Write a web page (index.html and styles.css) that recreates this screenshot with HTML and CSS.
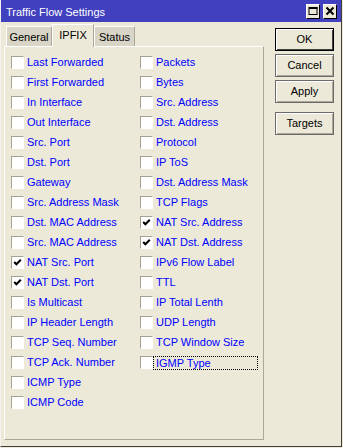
FILE: index.html
```html
<!DOCTYPE html>
<html>
<head>
<meta charset="utf-8">
<link rel="stylesheet" href="styles.css">
</head>
<body>
<div class="window">
  <div class="titlebar">
    <span class="title">Traffic Flow Settings</span>
    <div class="tb-buttons">
      <span class="tb-btn"><svg width="12" height="12" viewBox="0 0 12 12"><rect x="2" y="2.5" width="8" height="7" fill="none" stroke="#000" stroke-width="1"/><rect x="2" y="2" width="8.5" height="2" fill="#000"/></svg></span>
      <span class="tb-btn"><svg width="12" height="12" viewBox="0 0 12 12"><path d="M2.5 2.5 L9.5 9.5 M9.5 2.5 L2.5 9.5" stroke="#000" stroke-width="2"/></svg></span>
    </div>
  </div>
  <div class="body">
    <div class="left">
      <div class="tabs">
        <div class="tab t-general">General</div>
        <div class="tab t-ipfix active">IPFIX</div>
        <div class="tab t-status">Status</div>
      </div>
      <div class="panel">
        <div class="col col1">
          <div class="row"><span class="cb"></span><span class="lbl">Last Forwarded</span></div>
          <div class="row"><span class="cb"></span><span class="lbl">First Forwarded</span></div>
          <div class="row"><span class="cb"></span><span class="lbl">In Interface</span></div>
          <div class="row"><span class="cb"></span><span class="lbl">Out Interface</span></div>
          <div class="row"><span class="cb"></span><span class="lbl">Src. Port</span></div>
          <div class="row"><span class="cb"></span><span class="lbl">Dst. Port</span></div>
          <div class="row"><span class="cb"></span><span class="lbl">Gateway</span></div>
          <div class="row"><span class="cb"></span><span class="lbl">Src. Address Mask</span></div>
          <div class="row"><span class="cb"></span><span class="lbl">Dst. MAC Address</span></div>
          <div class="row"><span class="cb"></span><span class="lbl">Src. MAC Address</span></div>
          <div class="row"><span class="cb checked"><svg width="11" height="11" viewBox="0 0 11 11"><path d="M2.2 5 L4.4 7.3 L8.8 2.8" fill="none" stroke="#000" stroke-width="2"/></svg></span><span class="lbl">NAT Src. Port</span></div>
          <div class="row"><span class="cb checked"><svg width="11" height="11" viewBox="0 0 11 11"><path d="M2.2 5 L4.4 7.3 L8.8 2.8" fill="none" stroke="#000" stroke-width="2"/></svg></span><span class="lbl">NAT Dst. Port</span></div>
          <div class="row"><span class="cb"></span><span class="lbl">Is Multicast</span></div>
          <div class="row"><span class="cb"></span><span class="lbl">IP Header Length</span></div>
          <div class="row"><span class="cb"></span><span class="lbl">TCP Seq. Number</span></div>
          <div class="row"><span class="cb"></span><span class="lbl">TCP Ack. Number</span></div>
          <div class="row"><span class="cb"></span><span class="lbl">ICMP Type</span></div>
          <div class="row"><span class="cb"></span><span class="lbl">ICMP Code</span></div>
        </div>
        <div class="col col2">
          <div class="row"><span class="cb"></span><span class="lbl">Packets</span></div>
          <div class="row"><span class="cb"></span><span class="lbl">Bytes</span></div>
          <div class="row"><span class="cb"></span><span class="lbl">Src. Address</span></div>
          <div class="row"><span class="cb"></span><span class="lbl">Dst. Address</span></div>
          <div class="row"><span class="cb"></span><span class="lbl">Protocol</span></div>
          <div class="row"><span class="cb"></span><span class="lbl">IP ToS</span></div>
          <div class="row"><span class="cb"></span><span class="lbl">Dst. Address Mask</span></div>
          <div class="row"><span class="cb"></span><span class="lbl">TCP Flags</span></div>
          <div class="row"><span class="cb checked"><svg width="11" height="11" viewBox="0 0 11 11"><path d="M2.2 5 L4.4 7.3 L8.8 2.8" fill="none" stroke="#000" stroke-width="2"/></svg></span><span class="lbl">NAT Src. Address</span></div>
          <div class="row"><span class="cb checked"><svg width="11" height="11" viewBox="0 0 11 11"><path d="M2.2 5 L4.4 7.3 L8.8 2.8" fill="none" stroke="#000" stroke-width="2"/></svg></span><span class="lbl">NAT Dst. Address</span></div>
          <div class="row"><span class="cb"></span><span class="lbl">IPv6 Flow Label</span></div>
          <div class="row"><span class="cb"></span><span class="lbl">TTL</span></div>
          <div class="row"><span class="cb"></span><span class="lbl">IP Total Lenth</span></div>
          <div class="row"><span class="cb"></span><span class="lbl">UDP Length</span></div>
          <div class="row"><span class="cb"></span><span class="lbl">TCP Window Size</span></div>
          <div class="row"><span class="cb"></span><span class="lbl focus">IGMP Type</span></div>
        </div>
      </div>
    </div>
    <div class="buttons">
      <div class="btn default">OK</div>
      <div class="btn">Cancel</div>
      <div class="btn apply">Apply</div>
      <div class="btn">Targets</div>
    </div>
  </div>
</div>
</body>
</html>
```

FILE: styles.css
```css
html, body {
  margin: 0;
  padding: 0;
}
body {
  width: 343px;
  height: 448px;
  background: #ece9d8;
  font-family: "Liberation Sans", Arial, sans-serif;
  font-size: 11px;
  overflow: hidden;
}
.window {
  box-sizing: border-box;
  width: 342px;
  height: 447px;
  background: #ece9d8;
  border-left: 1px solid #f4f3ee;
  border-right: 1px solid #404040;
  border-bottom: 1px solid #404040;
}
.titlebar {
  height: 22px;
  background: #4141bf;
  display: flex;
  align-items: center;
  padding-left: 5px;
  padding-right: 4px;
}
.title {
  color: #fff;
  font-size: 11px;
  flex: 1;
  margin-top: 1px;
}
.tb-buttons {
  display: flex;
  gap: 3px;
}
.tb-btn {
  box-sizing: border-box;
  width: 14px;
  height: 15px;
  background: #ece9d8;
  border: 1px solid;
  border-color: #fff #000 #000 #fff;
  display: flex;
  align-items: center;
  justify-content: center;
}
.body {
  display: flex;
  padding-top: 2px;
}
.left {
  margin-left: 3px;
}
.tabs {
  display: flex;
  align-items: flex-end;
  height: 22px;
  padding-left: 2px;
}
.tab {
  box-sizing: border-box;
  height: 20px;
  background: #d8d5c7;
  border: 1px solid;
  border-color: #fff #aca899 transparent #fff;
  border-bottom: none;
  text-align: center;
  line-height: 20px;
  color: #000;
}
.t-general { width: 46px; }
.t-ipfix { width: 42px; }
.t-status { width: 41px; }
.tab.active {
  height: 23px;
  margin-bottom: -1px;
  background: #ece9d8;
  position: relative;
  z-index: 1;
  line-height: 20px;
}
.panel {
  box-sizing: border-box;
  width: 260px;
  height: 394px;
  border: 1px solid #aca899;
  border-top-color: #fff;
  border-left-color: #fff;
  padding: 5px 0 0 6px;
  display: flex;
}
.col1 {
  width: 129px;
}
.row {
  height: 20px;
  display: flex;
  align-items: center;
}
.cb {
  box-sizing: border-box;
  width: 13px;
  height: 13px;
  background: #fff;
  border: 1px solid;
  border-color: #a5a294 #fff #fff #a5a294;
  margin-right: 3px;
  display: flex;
}
.lbl {
  color: #0000ff;
  white-space: nowrap;
}
.focus {
  box-sizing: border-box;
  width: 105px;
  height: 14px;
  line-height: 12px;
  border: 1px dotted #000;
  margin-left: -3px;
  padding-left: 2px;
  margin-top: 1px;
}
.buttons {
  margin-left: 11px;
  margin-top: 4px;
  display: flex;
  flex-direction: column;
}
.btn {
  box-sizing: border-box;
  width: 59px;
  height: 23px;
  margin-bottom: 3px;
  border: 1px solid #6b6b6b;
  box-shadow: inset 1px 1px #fff, inset -1px -1px #aca899;
  text-align: center;
  line-height: 21px;
  color: #000;
}
.btn.default {
  border-color: #000;
  box-shadow: inset 1px 1px #fff, inset -1px -1px #404040;
}
.btn.apply {
  margin-bottom: 9px;
}
```
